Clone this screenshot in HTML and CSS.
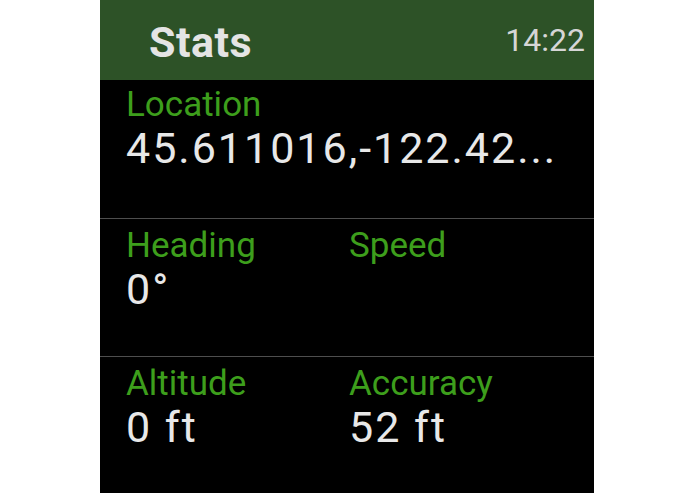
FILE: index.html
```html
<html>
<head>
    <link rel="stylesheet" href="styles.css">
</head>
<body>
    <div class="screen">
        <div class="header">
            <h1 class="title">Stats</h1>
            <span class="clock">14:22</span>
        </div>

        <div class="row row-first">
            <div class="stat">
                <div class="label">Location</div>
                <div class="value">45.611016,-122.42...</div>
            </div>
        </div>

        <div class="row">
            <div class="stat">
                <div class="label">Heading</div>
                <div class="value">0°</div>
            </div>
            <div class="stat">
                <div class="label">Speed</div>
                <div class="value"></div>
            </div>
        </div>

        <div class="row row-last">
            <div class="stat">
                <div class="label">Altitude</div>
                <div class="value">0 ft</div>
            </div>
            <div class="stat">
                <div class="label">Accuracy</div>
                <div class="value">52 ft</div>
            </div>
        </div>
    </div>
</body>
</html>
```

FILE: styles.css
```css
body {
    margin: 0;
    background-color: #fff;
    font-family: Roboto, "Liberation Sans", sans-serif;
}

.screen {
    width: 494px;
    height: 493px;
    margin-left: 100px;
    background-color: #000;
    display: flex;
    flex-direction: column;
    overflow: hidden;
}

.header {
    height: 80px;
    box-sizing: border-box;
    padding: 4px 9px 0 49px;
    background-color: #2d5227;
    display: flex;
    align-items: center;
    justify-content: space-between;
}

.title {
    margin: 0;
    font-size: 43px;
    font-weight: bold;
    letter-spacing: 0.5px;
    color: #e4e4e4;
}

.clock {
    margin-top: -4px;
    font-size: 32px;
    color: #d6d6d6;
}

.row {
    height: 138px;
    flex-shrink: 0;
    box-sizing: border-box;
    padding: 7px 20px 0 26px;
    border-top: 1px solid #4e4e4e;
    display: grid;
    grid-template-columns: 223px 1fr;
}

.row-first {
    padding-top: 5px;
    border-top: none;
    grid-template-columns: 1fr;
}

.row-last {
    flex: 1;
}

.label {
    font-size: 35px;
    line-height: 40px;
    color: #3d9e1c;
}

.value {
    font-size: 43px;
    line-height: 46px;
    letter-spacing: 2px;
    color: #e8e8e8;
    white-space: nowrap;
}
```
